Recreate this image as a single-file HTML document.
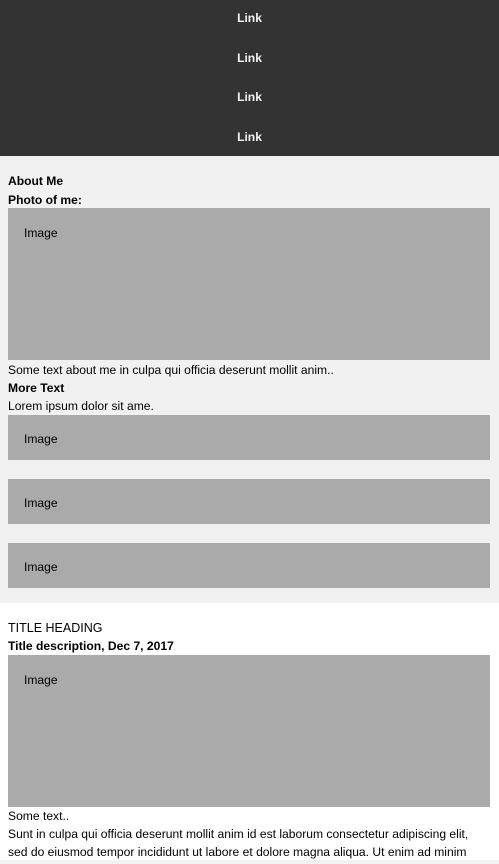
<!DOCTYPE html>
<html><head><meta charset="utf-8"><style>
*{margin:0;padding:0;box-sizing:border-box}
body{width:499px;height:864px;background:#f1f1f1;font-family:"Liberation Sans",Arial,sans-serif;font-size:12.1px;color:#000;position:relative;overflow:hidden}
.a{position:absolute;white-space:nowrap}
.nav{position:absolute;left:0;top:0;width:499px;height:156px;background:#333}
.l{position:absolute;left:0;width:499px;text-align:center;color:#f2f2f2;font-weight:bold;font-size:12.1px}
.img{position:absolute;left:8px;width:482px;background:#aaa}
.img span{position:absolute;left:16px;top:18px}
b{font-weight:bold}
</style></head><body>
<div class="nav">
<div class="l" style="top:11px">Link</div>
<div class="l" style="top:51px">Link</div>
<div class="l" style="top:90px">Link</div>
<div class="l" style="top:130px">Link</div>
</div>
<div class="a" style="top:174px;left:8px"><b>About Me</b></div>
<div class="a" style="top:193px;left:8px"><b>Photo of me:</b></div>
<div class="img" style="top:208px;height:152px"><span>Image</span></div>
<div class="a" style="top:363px;left:8px">Some text about me in culpa qui officia deserunt mollit anim..</div>
<div class="a" style="top:381px;left:8px"><b>More Text</b></div>
<div class="a" style="top:399px;left:8px">Lorem ipsum dolor sit ame.</div>
<div class="img" style="top:415px;height:45px"><span style="top:17px">Image</span></div>
<div class="img" style="top:479px;height:45px"><span style="top:17px">Image</span></div>
<div class="img" style="top:543px;height:45px"><span style="top:17px">Image</span></div>
<div style="position:absolute;left:0;top:603px;width:499px;height:257px;background:#fff"></div>
<div class="a" style="top:621px;left:8px;font-size:12.5px">TITLE HEADING</div>
<div class="a" style="top:639px;left:8px"><b>Title description, Dec 7, 2017</b></div>
<div class="img" style="top:655px;height:152px"><span>Image</span></div>
<div class="a" style="top:809px;left:8px">Some text..</div>
<div class="a" style="top:827px;left:8px">Sunt in culpa qui officia deserunt mollit anim id est laborum consectetur adipiscing elit,</div>
<div class="a" style="top:845px;left:8px;height:15px;overflow:hidden">sed do eiusmod tempor incididunt ut labore et dolore magna aliqua. Ut enim ad minim</div>
</body></html>
